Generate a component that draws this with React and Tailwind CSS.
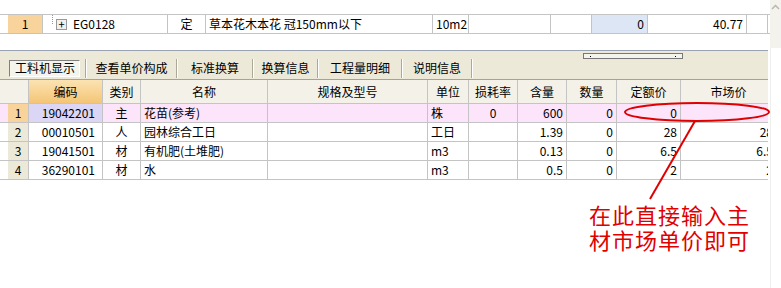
import React from "react";

const font = { fontFamily: '"Noto Sans CJK SC", "Noto Sans", sans-serif' };

const tabs = [
  { t: "工料机显示", w: "" },
  { t: "查看单价构成", w: "w-[89px]" },
  { t: "标准换算", w: "w-[74px]" },
  { t: "换算信息", w: "w-[63px]" },
  { t: "工程量明细", w: "w-[82px]" },
  { t: "说明信息", w: "w-[68px]" },
];

const headers = [
  { label: "", w: "w-[21px]" },
  { label: "编码", w: "w-[74px]", hot: true },
  { label: "类别", w: "w-[38px]" },
  { label: "名称", w: "w-[127px]" },
  { label: "规格及型号", w: "w-[160px]" },
  { label: "单位", w: "w-[41px]" },
  { label: "损耗率", w: "w-[49px]" },
  { label: "含量", w: "w-[49px]" },
  { label: "数量", w: "w-[50px]" },
  { label: "定额价", w: "w-[64px]" },
  { label: "市场价", w: "w-[96px]" },
];

const rows = [
  { no: 1, code: "19042201", type: "主", name: "花苗(参考)", unit: "株", loss: "0", qty: "600", num: "0", base: "0", market: "" },
  { no: 2, code: "00010501", type: "人", name: "园林综合工日", unit: "工日", loss: "", qty: "1.39", num: "0", base: "28", market: "28" },
  { no: 3, code: "19041501", type: "材", name: "有机肥(土堆肥)", unit: "m3", loss: "", qty: "0.13", num: "0", base: "6.5", market: "6.5" },
  { no: 4, code: "36290101", type: "材", name: "水", unit: "m3", loss: "", qty: "0.5", num: "0", base: "2", market: "2" },
];

function Cell({ w, className = "", children }) {
  return (
    <div className={`${w} h-full shrink-0 flex items-center border-r border-[#c4c4c4] px-[3px] overflow-hidden whitespace-nowrap ${className}`}>
      {children}
    </div>
  );
}

export default function App() {
  return (
    <div className="relative w-[781px] h-[288px] overflow-hidden bg-white text-[12px] text-black flex" style={font}>
      <div className="w-[770px] shrink-0 flex flex-col">
        {/* upper grid row */}
        <div className="h-[14px]" />
        <div className="h-[20px] flex border-y border-[#c4c4c4] pl-[8px]">
          <div className="w-[35px] h-full bg-[#f8d49c] flex items-center justify-center border-r border-[#c4c4c4]">1</div>
          <Cell w="w-[125px]" className="relative pl-[13px] gap-[6px]">
            <span className="absolute left-[9px] top-0 h-[9px] border-l border-dotted border-[#999]" />
            <span className="w-[11px] h-[11px] border border-[#999] bg-[#f0f0f0] flex items-center justify-center text-[11px] leading-none">+</span>
            <span>EG0128</span>
          </Cell>
          <Cell w="w-[38px]" className="justify-center">定</Cell>
          <Cell w="w-[227px]">草本花木本花 冠150mm以下</Cell>
          <Cell w="w-[36px]">10m2</Cell>
          <Cell w="w-[82px]" />
          <Cell w="w-[41px]" />
          <Cell w="w-[56px]" className="justify-end bg-[#dce6f4]">0</Cell>
          <Cell w="w-[99px]" className="justify-end">40.77</Cell>
          <Cell w="w-[21px]" />
        </div>
        <div className="h-[16px]" />

        {/* tab strip */}
        <div className="relative h-[30px] w-[768px] bg-[#ece9d8] border-t border-[#9aa3b3] border-b border-b-[#9aa3b3] flex items-end pl-[9px] pb-[1px]">
          <div className="absolute left-[583px] top-[2px] w-[100px] h-[6px] border border-[#777] bg-[#f4f3ee] flex justify-between px-[6px] items-center">
            <span className="w-[1px] h-[1px] bg-black" />
            <span className="w-[1px] h-[1px] bg-black" />
          </div>
          {tabs.map((tab, i) => (
            <div key={tab.t} className="flex items-center h-[20px]">
              {i === 0 ? (
                <div className="h-[17px] pl-[5px] pr-[4px] mr-[5px] flex items-center border border-t-[#808080] border-l-[#808080] border-r-white border-b-white bg-[#f5f4ec]">{tab.t}</div>
              ) : (
                <div className={`${tab.w} text-center`}>{tab.t}</div>
              )}
              <div className="h-[19px] w-[2px] border-l border-[#aca899] border-r border-r-white" />
            </div>
          ))}
        </div>

        {/* lower grid */}
        <div className="w-[768px] overflow-hidden">
          <div className="h-[24px] flex pl-[8px] border-b border-[#c4c4c4] bg-[#f4f2e8]">
            {headers.map((h, i) => (
              <Cell key={i} w={h.w} className={`justify-center ${h.hot ? "bg-gradient-to-b from-[#fbe3b2] to-[#f4c575]" : ""}`}>
                {h.label}
              </Cell>
            ))}
          </div>

          {rows.map((r, idx) => {
            const first = idx === 0;
            return (
              <div key={r.no} className={`h-[19px] flex pl-[8px] border-b border-[#c4c4c4] ${first ? "bg-[#fce4fa]" : "bg-white"}`}>
                <Cell w="w-[21px]" className={`justify-center ${first ? "bg-[#f8d49c]" : "bg-[#ece9d8]"}`}>{r.no}</Cell>
                <Cell w="w-[74px]" className={`justify-end pr-[7px] ${first ? "bg-[#dcd6f6]" : ""}`}>{r.code}</Cell>
                <Cell w="w-[38px]" className="justify-center">{r.type}</Cell>
                <Cell w="w-[127px]">{r.name}</Cell>
                <Cell w="w-[160px]" />
                <Cell w="w-[41px]">{r.unit}</Cell>
                <Cell w="w-[49px]" className="justify-center">{r.loss}</Cell>
                <Cell w="w-[49px]" className="justify-end">{r.qty}</Cell>
                <Cell w="w-[50px]" className="justify-end">{r.num}</Cell>
                <Cell w="w-[64px]" className="justify-end">{r.base}</Cell>
                <Cell w="w-[96px]" className="justify-end">{r.market}</Cell>
              </div>
            );
          })}
        </div>
      </div>

      {/* right scrollbar strip */}
      <div className="flex-1 flex flex-col">
        <div className="h-[48px] bg-[#f3f2ec] flex justify-center pt-[4px]">
          <svg width="9" height="6" viewBox="0 0 9 6">
            <path d="M1 5 L4.5 1.5 L8 5" fill="none" stroke="#b9b7ad" strokeWidth="1.5" />
          </svg>
        </div>
        <div className="flex-1 bg-white border-l border-[#eeeeee]" />
      </div>

      {/* red annotation */}
      <svg className="absolute left-0 top-0 pointer-events-none" width="781" height="288">
        <ellipse cx="697" cy="112" rx="72" ry="9" fill="none" stroke="#e00000" strokeWidth="2" />
        <line x1="695" y1="121" x2="650" y2="199" stroke="#e00000" strokeWidth="2" />
      </svg>
      <div className="absolute left-[589px] top-[202px] text-[22px] leading-[25px] tracking-[1px] text-[#e00000]">
        <div>在此直接输入主</div>
        <div>材市场单价即可</div>
      </div>
    </div>
  );
}
